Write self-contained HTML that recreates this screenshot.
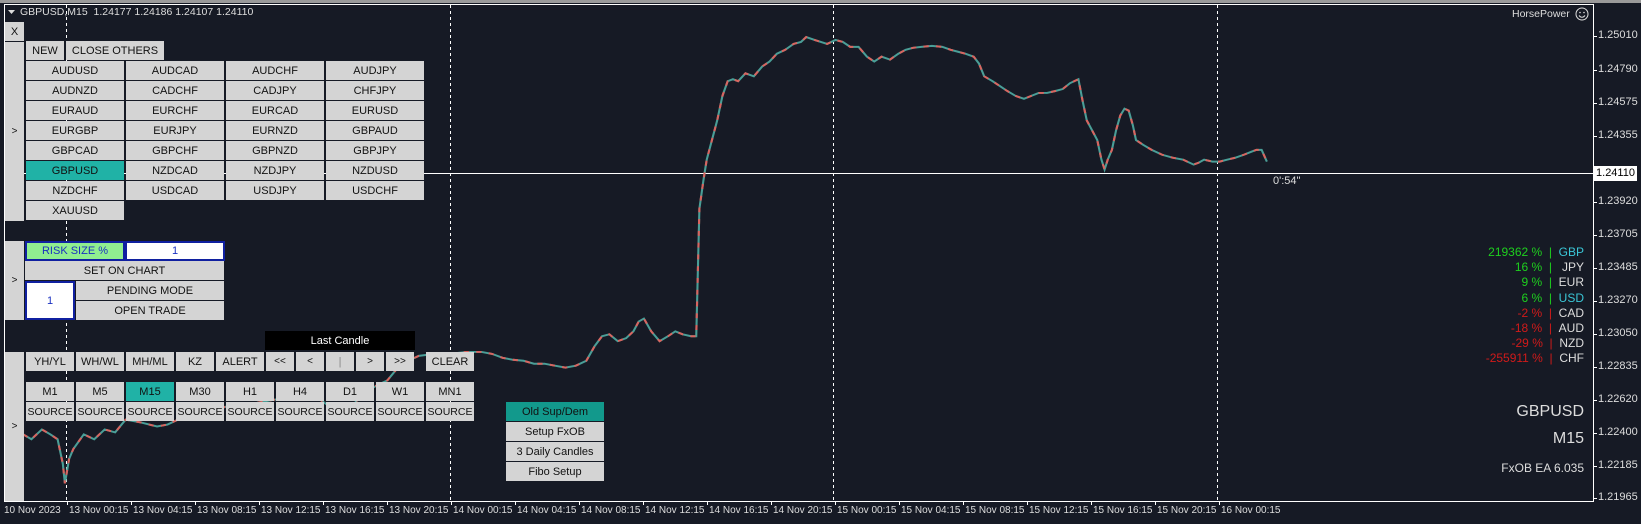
<!DOCTYPE html>
<html><head><meta charset="utf-8"><style>
body{margin:0;width:1641px;height:524px;background:#161a25;position:relative;overflow:hidden;font-family:"Liberation Sans",Tahoma,sans-serif;}
.b{position:absolute;background:#d4d4d4;color:#111;font-size:11px;text-align:center;box-sizing:border-box;display:flex;align-items:center;justify-content:center;white-space:nowrap;height:19px;overflow:hidden;}
.t{position:absolute;font-size:11px;color:#ddd;white-space:nowrap;}
.g{background:#20b2a6;}
.p{position:absolute;left:1598px;font-size:11px;color:#ddd;}
.d{position:absolute;top:505px;font-size:10px;color:#ddd;white-space:nowrap;}
</style></head><body>
<div style="position:absolute;left:0;top:0;width:1641px;height:3px;background:#9a9a9a"></div>
<div style="position:absolute;left:4px;top:4px;width:1590px;height:498px;border:1px solid #fff;box-sizing:border-box"></div>
<svg style="position:absolute;left:0;top:0" width="1641" height="524">
<g stroke="#fff" stroke-dasharray="3 3" stroke-width="1">
<line x1="66.5" y1="5" x2="66.5" y2="501"/><line x1="450.5" y1="5" x2="450.5" y2="501"/><line x1="833.5" y1="5" x2="833.5" y2="501"/><line x1="1217.5" y1="5" x2="1217.5" y2="501"/>
</g>
<line x1="5" y1="173.5" x2="1593" y2="173.5" stroke="#fff"/>
<g transform="matrix(1.047 0 0 0.981 0 2.7)" fill="none" stroke-width="2">
<polyline stroke="#4a9e97" points="22,440 30,445 40,435 48,440 55,445 60,470 62,490 66,465 70,455 80,440 90,445 100,435 110,438 120,425 135,428 150,432 160,430 170,425 185,420 200,418 215,412 230,410 245,408 260,405 280,402 300,400 310,408 320,415 330,420 345,400 360,390 370,385 380,372 390,365 400,360 415,358 430,358 445,356 460,356 470,358 480,362 490,364 500,365 510,368 520,368 530,370 540,372 550,370 560,365 568,350 575,340 582,338 590,345 598,342 605,335 610,325 615,322 622,335 630,345 638,340 645,335 652,338 660,340 665,340 668,210 672,180 675,160 680,140 685,120 690,95 695,80 700,78 705,80 712,72 720,75 728,65 735,60 742,52 750,48 758,42 765,40 770,35 778,38 790,42 798,38 805,40 812,45 820,45 828,55 835,60 842,55 850,58 858,52 865,48 872,46 880,45 890,44 900,45 908,48 915,50 922,52 930,55 935,62 940,75 948,80 955,85 962,90 970,95 978,98 985,95 992,92 1000,92 1008,90 1015,88 1022,82 1030,78 1034,100 1038,120 1043,130 1048,140 1052,160 1055,170 1058,160 1062,150 1066,130 1070,115 1074,108 1078,110 1082,125 1085,140 1092,145 1100,150 1110,155 1120,158 1130,160 1140,165 1145,163 1150,160 1158,162 1165,162 1172,160 1180,158 1188,155 1195,152 1200,150 1205,150 1210,162"/>
<polyline stroke="#d9645f" stroke-dasharray="5 7" points="22,440 30,445 40,435 48,440 55,445 60,470 62,490 66,465 70,455 80,440 90,445 100,435 110,438 120,425 135,428 150,432 160,430 170,425 185,420 200,418 215,412 230,410 245,408 260,405 280,402 300,400 310,408 320,415 330,420 345,400 360,390 370,385 380,372 390,365 400,360 415,358 430,358 445,356 460,356 470,358 480,362 490,364 500,365 510,368 520,368 530,370 540,372 550,370 560,365 568,350 575,340 582,338 590,345 598,342 605,335 610,325 615,322 622,335 630,345 638,340 645,335 652,338 660,340 665,340 668,210 672,180 675,160 680,140 685,120 690,95 695,80 700,78 705,80 712,72 720,75 728,65 735,60 742,52 750,48 758,42 765,40 770,35 778,38 790,42 798,38 805,40 812,45 820,45 828,55 835,60 842,55 850,58 858,52 865,48 872,46 880,45 890,44 900,45 908,48 915,50 922,52 930,55 935,62 940,75 948,80 955,85 962,90 970,95 978,98 985,95 992,92 1000,92 1008,90 1015,88 1022,82 1030,78 1034,100 1038,120 1043,130 1048,140 1052,160 1055,170 1058,160 1062,150 1066,130 1070,115 1074,108 1078,110 1082,125 1085,140 1092,145 1100,150 1110,155 1120,158 1130,160 1140,165 1145,163 1150,160 1158,162 1165,162 1172,160 1180,158 1188,155 1195,152 1200,150 1205,150 1210,162"/>
</g>
<g stroke="#fff"><line x1="1593" y1="36.5" x2="1597" y2="36.5"/><line x1="1593" y1="70.5" x2="1597" y2="70.5"/><line x1="1593" y1="103.5" x2="1597" y2="103.5"/><line x1="1593" y1="136.5" x2="1597" y2="136.5"/><line x1="1593" y1="202.5" x2="1597" y2="202.5"/><line x1="1593" y1="235.5" x2="1597" y2="235.5"/><line x1="1593" y1="268.5" x2="1597" y2="268.5"/><line x1="1593" y1="301.5" x2="1597" y2="301.5"/><line x1="1593" y1="334.5" x2="1597" y2="334.5"/><line x1="1593" y1="367.5" x2="1597" y2="367.5"/><line x1="1593" y1="400.5" x2="1597" y2="400.5"/><line x1="1593" y1="433.5" x2="1597" y2="433.5"/><line x1="1593" y1="466.5" x2="1597" y2="466.5"/><line x1="1593" y1="498.5" x2="1597" y2="498.5"/>
<line x1="67.5" y1="501" x2="67.5" y2="505"/><line x1="131.5" y1="501" x2="131.5" y2="505"/><line x1="195.5" y1="501" x2="195.5" y2="505"/><line x1="259.5" y1="501" x2="259.5" y2="505"/><line x1="323.5" y1="501" x2="323.5" y2="505"/><line x1="387.5" y1="501" x2="387.5" y2="505"/><line x1="451.5" y1="501" x2="451.5" y2="505"/><line x1="515.5" y1="501" x2="515.5" y2="505"/><line x1="579.5" y1="501" x2="579.5" y2="505"/><line x1="643.5" y1="501" x2="643.5" y2="505"/><line x1="707.5" y1="501" x2="707.5" y2="505"/><line x1="771.5" y1="501" x2="771.5" y2="505"/><line x1="835.5" y1="501" x2="835.5" y2="505"/><line x1="899.5" y1="501" x2="899.5" y2="505"/><line x1="963.5" y1="501" x2="963.5" y2="505"/><line x1="1027.5" y1="501" x2="1027.5" y2="505"/><line x1="1091.5" y1="501" x2="1091.5" y2="505"/><line x1="1155.5" y1="501" x2="1155.5" y2="505"/><line x1="1219.5" y1="501" x2="1219.5" y2="505"/></g>
<circle cx="1582" cy="14" r="6" fill="none" stroke="#ddd"/><circle cx="1580" cy="12.5" r=".8" fill="#ddd"/><circle cx="1584" cy="12.5" r=".8" fill="#ddd"/><path d="M1579 15.5 Q1582 19 1585 15.5" stroke="#ddd" fill="none"/>
<path d="M8 10 L15 10 L11.5 14 Z" fill="#ddd"/>
</svg>
<div class="t" style="left:20px;top:6px;font-size:10.5px">GBPUSD,M15&nbsp; 1.24177 1.24186 1.24107 1.24110</div>
<div class="t" style="left:1512px;top:8px;font-size:10.5px">HorsePower</div>
<div class="t" style="left:1273px;top:175px">0':54"</div>
<div class="p" style="top:29px">1.25010</div><div class="p" style="top:63px">1.24790</div><div class="p" style="top:96px">1.24575</div><div class="p" style="top:129px">1.24355</div>
<div style="position:absolute;left:1594px;top:166px;width:43px;height:15px;background:#fff;color:#000;font-size:11px;line-height:15px;text-align:center">1.24110</div>
<div class="p" style="top:195px">1.23920</div><div class="p" style="top:228px">1.23705</div><div class="p" style="top:261px">1.23485</div><div class="p" style="top:294px">1.23270</div><div class="p" style="top:327px">1.23050</div><div class="p" style="top:360px">1.22835</div><div class="p" style="top:393px">1.22620</div><div class="p" style="top:426px">1.22400</div><div class="p" style="top:459px">1.22185</div><div class="p" style="top:491px">1.21965</div>
<div class="d" style="left:4px">10 Nov 2023</div><div class="d" style="left:69px">13 Nov 00:15</div><div class="d" style="left:133px">13 Nov 04:15</div><div class="d" style="left:197px">13 Nov 08:15</div><div class="d" style="left:261px">13 Nov 12:15</div><div class="d" style="left:325px">13 Nov 16:15</div><div class="d" style="left:389px">13 Nov 20:15</div><div class="d" style="left:453px">14 Nov 00:15</div><div class="d" style="left:517px">14 Nov 04:15</div><div class="d" style="left:581px">14 Nov 08:15</div><div class="d" style="left:645px">14 Nov 12:15</div><div class="d" style="left:709px">14 Nov 16:15</div><div class="d" style="left:773px">14 Nov 20:15</div><div class="d" style="left:837px">15 Nov 00:15</div><div class="d" style="left:901px">15 Nov 04:15</div><div class="d" style="left:965px">15 Nov 08:15</div><div class="d" style="left:1029px">15 Nov 12:15</div><div class="d" style="left:1093px">15 Nov 16:15</div><div class="d" style="left:1157px">15 Nov 20:15</div><div class="d" style="left:1221px">16 Nov 00:15</div>
<div style="position:absolute;left:1420px;top:245px;width:164px;font-size:12px;line-height:15.2px;text-align:right;white-space:nowrap">
<div><span style="color:#1ed01e">219362 % &nbsp;| </span>&nbsp;<span style="color:#3ac6d6">GBP</span></div>
<div><span style="color:#1ed01e">16 % &nbsp;| </span>&nbsp;<span style="color:#ddd">&nbsp;JPY</span></div>
<div><span style="color:#1ed01e">9 % &nbsp;| </span>&nbsp;<span style="color:#ddd">EUR</span></div>
<div><span style="color:#1ed01e">6 % &nbsp;| </span>&nbsp;<span style="color:#3ac6d6">USD</span></div>
<div><span style="color:#d11a1a">-2 % &nbsp;| </span>&nbsp;<span style="color:#ddd">CAD</span></div>
<div><span style="color:#d11a1a">-18 % &nbsp;| </span>&nbsp;<span style="color:#ddd">AUD</span></div>
<div><span style="color:#d11a1a">-29 % &nbsp;| </span>&nbsp;<span style="color:#ddd">NZD</span></div>
<div><span style="color:#d11a1a">-255911 % &nbsp;| </span>&nbsp;<span style="color:#ddd">CHF</span></div>
</div>
<div class="t" style="left:1484px;top:403px;font-size:16px;width:100px;text-align:right">GBPUSD</div>
<div class="t" style="left:1484px;top:430px;font-size:16px;width:100px;text-align:right">M15</div>
<div class="t" style="left:1444px;top:461px;font-size:12px;width:140px;text-align:right">FxOB EA 6.035</div>
<div class="b" style="left:5px;top:22px;width:19px;height:19px">X</div>
<div class="b" style="left:5px;top:42px;width:19px;height:179px;font-size:10px">&gt;</div>
<div class="b" style="left:26px;top:41px;width:38px">NEW</div>
<div class="b" style="left:66px;top:41px;width:98px">CLOSE OTHERS</div>
<div class="b" style="left:26px;top:61px;width:98px">AUDUSD</div><div class="b" style="left:126px;top:61px;width:98px">AUDCAD</div><div class="b" style="left:226px;top:61px;width:98px">AUDCHF</div><div class="b" style="left:326px;top:61px;width:98px">AUDJPY</div>
<div class="b" style="left:26px;top:81px;width:98px">AUDNZD</div><div class="b" style="left:126px;top:81px;width:98px">CADCHF</div><div class="b" style="left:226px;top:81px;width:98px">CADJPY</div><div class="b" style="left:326px;top:81px;width:98px">CHFJPY</div>
<div class="b" style="left:26px;top:101px;width:98px">EURAUD</div><div class="b" style="left:126px;top:101px;width:98px">EURCHF</div><div class="b" style="left:226px;top:101px;width:98px">EURCAD</div><div class="b" style="left:326px;top:101px;width:98px">EURUSD</div>
<div class="b" style="left:26px;top:121px;width:98px">EURGBP</div><div class="b" style="left:126px;top:121px;width:98px">EURJPY</div><div class="b" style="left:226px;top:121px;width:98px">EURNZD</div><div class="b" style="left:326px;top:121px;width:98px">GBPAUD</div>
<div class="b" style="left:26px;top:141px;width:98px">GBPCAD</div><div class="b" style="left:126px;top:141px;width:98px">GBPCHF</div><div class="b" style="left:226px;top:141px;width:98px">GBPNZD</div><div class="b" style="left:326px;top:141px;width:98px">GBPJPY</div>
<div class="b g" style="left:26px;top:161px;width:98px">GBPUSD</div><div class="b" style="left:126px;top:161px;width:98px">NZDCAD</div><div class="b" style="left:226px;top:161px;width:98px">NZDJPY</div><div class="b" style="left:326px;top:161px;width:98px">NZDUSD</div>
<div class="b" style="left:26px;top:181px;width:98px">NZDCHF</div><div class="b" style="left:126px;top:181px;width:98px">USDCAD</div><div class="b" style="left:226px;top:181px;width:98px">USDJPY</div><div class="b" style="left:326px;top:181px;width:98px">USDCHF</div>
<div class="b" style="left:26px;top:201px;width:98px">XAUUSD</div>
<div class="b" style="left:5px;top:241px;width:19px;height:79px;font-size:10px">&gt;</div>
<div class="b" style="left:25px;top:241px;width:100px;height:20px;background:#90ee90;color:#1a30c0;border:2px solid #1020a0">RISK SIZE %</div>
<div class="b" style="left:125px;top:241px;width:100px;height:20px;background:#fff;color:#1a30c0;border:2px solid #1020a0">1</div>
<div class="b" style="left:25px;top:261px;width:199px">SET ON CHART</div>
<div class="b" style="left:25px;top:281px;width:50px;height:39px;background:#fff;color:#1a30c0;border:2px solid #1020a0">1</div>
<div class="b" style="left:76px;top:281px;width:148px">PENDING MODE</div>
<div class="b" style="left:76px;top:301px;width:148px">OPEN TRADE</div>
<div class="b" style="left:265px;top:331px;width:150px;background:#000;color:#fff">Last Candle</div>
<div class="b" style="left:5px;top:352px;width:19px;height:149px;font-size:10px">&gt;</div>
<div class="b" style="left:26px;top:352px;width:48px">YH/YL</div><div class="b" style="left:76px;top:352px;width:48px">WH/WL</div><div class="b" style="left:126px;top:352px;width:48px">MH/ML</div><div class="b" style="left:176px;top:352px;width:38px">KZ</div><div class="b" style="left:216px;top:352px;width:48px">ALERT</div>
<div class="b" style="left:266px;top:352px;width:28px;font-size:10px">&lt;&lt;</div><div class="b" style="left:296px;top:352px;width:28px;font-size:10px">&lt;</div><div class="b" style="left:326px;top:352px;width:28px;color:#888">|</div><div class="b" style="left:356px;top:352px;width:28px;font-size:10px">&gt;</div><div class="b" style="left:386px;top:352px;width:28px;font-size:10px">&gt;&gt;</div>
<div class="b" style="left:426px;top:352px;width:48px">CLEAR</div>
<div class="b" style="left:26px;top:382px;width:48px">M1</div><div class="b" style="left:76px;top:382px;width:48px">M5</div><div class="b g" style="left:126px;top:382px;width:48px">M15</div><div class="b" style="left:176px;top:382px;width:48px">M30</div><div class="b" style="left:226px;top:382px;width:48px">H1</div><div class="b" style="left:276px;top:382px;width:48px">H4</div><div class="b" style="left:326px;top:382px;width:48px">D1</div><div class="b" style="left:376px;top:382px;width:48px">W1</div><div class="b" style="left:426px;top:382px;width:48px">MN1</div>
<div class="b" style="left:26px;top:402px;width:48px;font-size:10.5px">SOURCE</div><div class="b" style="left:76px;top:402px;width:48px;font-size:10.5px">SOURCE</div><div class="b" style="left:126px;top:402px;width:48px;font-size:10.5px">SOURCE</div><div class="b" style="left:176px;top:402px;width:48px;font-size:10.5px">SOURCE</div><div class="b" style="left:226px;top:402px;width:48px;font-size:10.5px">SOURCE</div><div class="b" style="left:276px;top:402px;width:48px;font-size:10.5px">SOURCE</div><div class="b" style="left:326px;top:402px;width:48px;font-size:10.5px">SOURCE</div><div class="b" style="left:376px;top:402px;width:48px;font-size:10.5px">SOURCE</div><div class="b" style="left:426px;top:402px;width:48px;font-size:10.5px">SOURCE</div>
<div class="b" style="left:506px;top:402px;width:98px;background:#12998c">Old Sup/Dem</div>
<div class="b" style="left:506px;top:422px;width:98px">Setup FxOB</div>
<div class="b" style="left:506px;top:442px;width:98px">3 Daily Candles</div>
<div class="b" style="left:506px;top:462px;width:98px">Fibo Setup</div>
</body></html>
